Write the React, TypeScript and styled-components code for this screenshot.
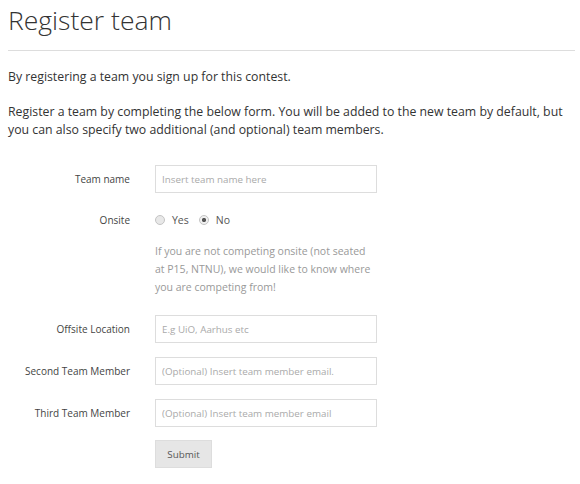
import React from "react";
import styled, { createGlobalStyle } from "styled-components";

const Global = createGlobalStyle`
  html, body { margin: 0; padding: 0; background: #fff; }
  body {
    font-family: "Open Sans", "Liberation Sans", sans-serif;
    color: #333;
  }
`;

const Page = styled.div`
  padding: 0 5px 0 8px;
`;

const Title = styled.h1`
  margin: 0;
  padding: 2px 0 0;
  font-size: 26.5px;
  font-weight: 300;
  line-height: 36px;
  color: #333;
`;

const Rule = styled.hr`
  margin: 12px 0 0;
  border: 0;
  border-top: 1px solid #ddd;
`;

const Lead = styled.p`
  margin: 17px 0 0;
  font-size: 12.3px;
  line-height: 18px;
  color: #333;
`;

const Form = styled.form`
  margin-top: 26px;
  display: flex;
  flex-direction: column;
  gap: 14px;
`;

const Row = styled.div`
  display: grid;
  grid-template-columns: 122px 222px;
  column-gap: 25px;
  align-items: start;
`;

const Label = styled.label<{ $pad?: number }>`
  text-align: right;
  font-size: 10px;
  line-height: 16px;
  padding-top: ${(p) => p.$pad ?? 6}px;
  color: #444;
`;

const Field = styled.div`
  grid-column: 2;
  display: flex;
  flex-direction: column;
`;

const Input = styled.input`
  box-sizing: border-box;
  width: 222px;
  height: 28px;
  margin: 0;
  padding: 0 6px;
  border: 1px solid #ddd;
  border-radius: 0;
  font-family: "Open Sans", "Liberation Sans", sans-serif;
  font-size: 9.8px;
  color: #555;
  outline: none;
  &::placeholder { color: #aaa; opacity: 1; }
`;

const Radios = styled.div`
  display: flex;
  align-items: center;
  height: 24px;
  padding-top: 1px;
  font-size: 10.5px;
  color: #555;
`;

const RadioItem = styled.span`
  display: inline-flex;
  align-items: center;
  margin-right: 10px;
`;

const RadioDot = styled.span<{ $checked?: boolean }>`
  box-sizing: border-box;
  width: 10px;
  height: 10px;
  border-radius: 50%;
  border: 1px solid #c4c4c4;
  background: ${(p) => (p.$checked ? "radial-gradient(circle, #555 0 1.8px, #f0f0f0 2.4px)" : "#e8e8e8")};
  margin-right: 7px;
`;

const Help = styled.p`
  margin: 10px 0 5px;
  font-size: 10.5px;
  line-height: 18px;
  color: #999;
  width: 221px;
`;

const Button = styled.button`
  box-sizing: border-box;
  width: 57px;
  height: 28px;
  margin: -1px 0 0;
  padding: 0;
  border: 1px solid #ddd;
  background: #e6e6e6;
  font-family: "Open Sans", "Liberation Sans", sans-serif;
  font-size: 9.8px;
  color: #555;
  border-radius: 0;
`;

export default function App() {
  return (
    <Page>
      <Global />
      <Title>Register team</Title>
      <Rule />
      <Lead>By registering a team you sign up for this contest.</Lead>
      <Lead>
        Register a team by completing the below form. You will be added to the new team by default, but
        you can also specify two additional (and optional) team members.
      </Lead>
      <Form onSubmit={(e) => e.preventDefault()}>
        <Row>
          <Label>Team name</Label>
          <Field>
            <Input placeholder="Insert team name here" />
          </Field>
        </Row>
        <Row>
          <Label $pad={5}>Onsite</Label>
          <Field>
            <Radios>
              <RadioItem>
                <RadioDot />
                Yes
              </RadioItem>
              <RadioItem>
                <RadioDot $checked />
                No
              </RadioItem>
            </Radios>
            <Help>
              If you are not competing onsite (not seated at P15, NTNU), we would like to know where
              you are competing from!
            </Help>
          </Field>
        </Row>
        <Row>
          <Label>Offsite Location</Label>
          <Field>
            <Input placeholder="E.g UiO, Aarhus etc" />
          </Field>
        </Row>
        <Row>
          <Label>Second Team Member</Label>
          <Field>
            <Input placeholder="(Optional) Insert team member email." />
          </Field>
        </Row>
        <Row>
          <Label>Third Team Member</Label>
          <Field>
            <Input placeholder="(Optional) Insert team member email" />
          </Field>
        </Row>
        <Row>
          <Field>
            <Button type="submit">Submit</Button>
          </Field>
        </Row>
      </Form>
    </Page>
  );
}
